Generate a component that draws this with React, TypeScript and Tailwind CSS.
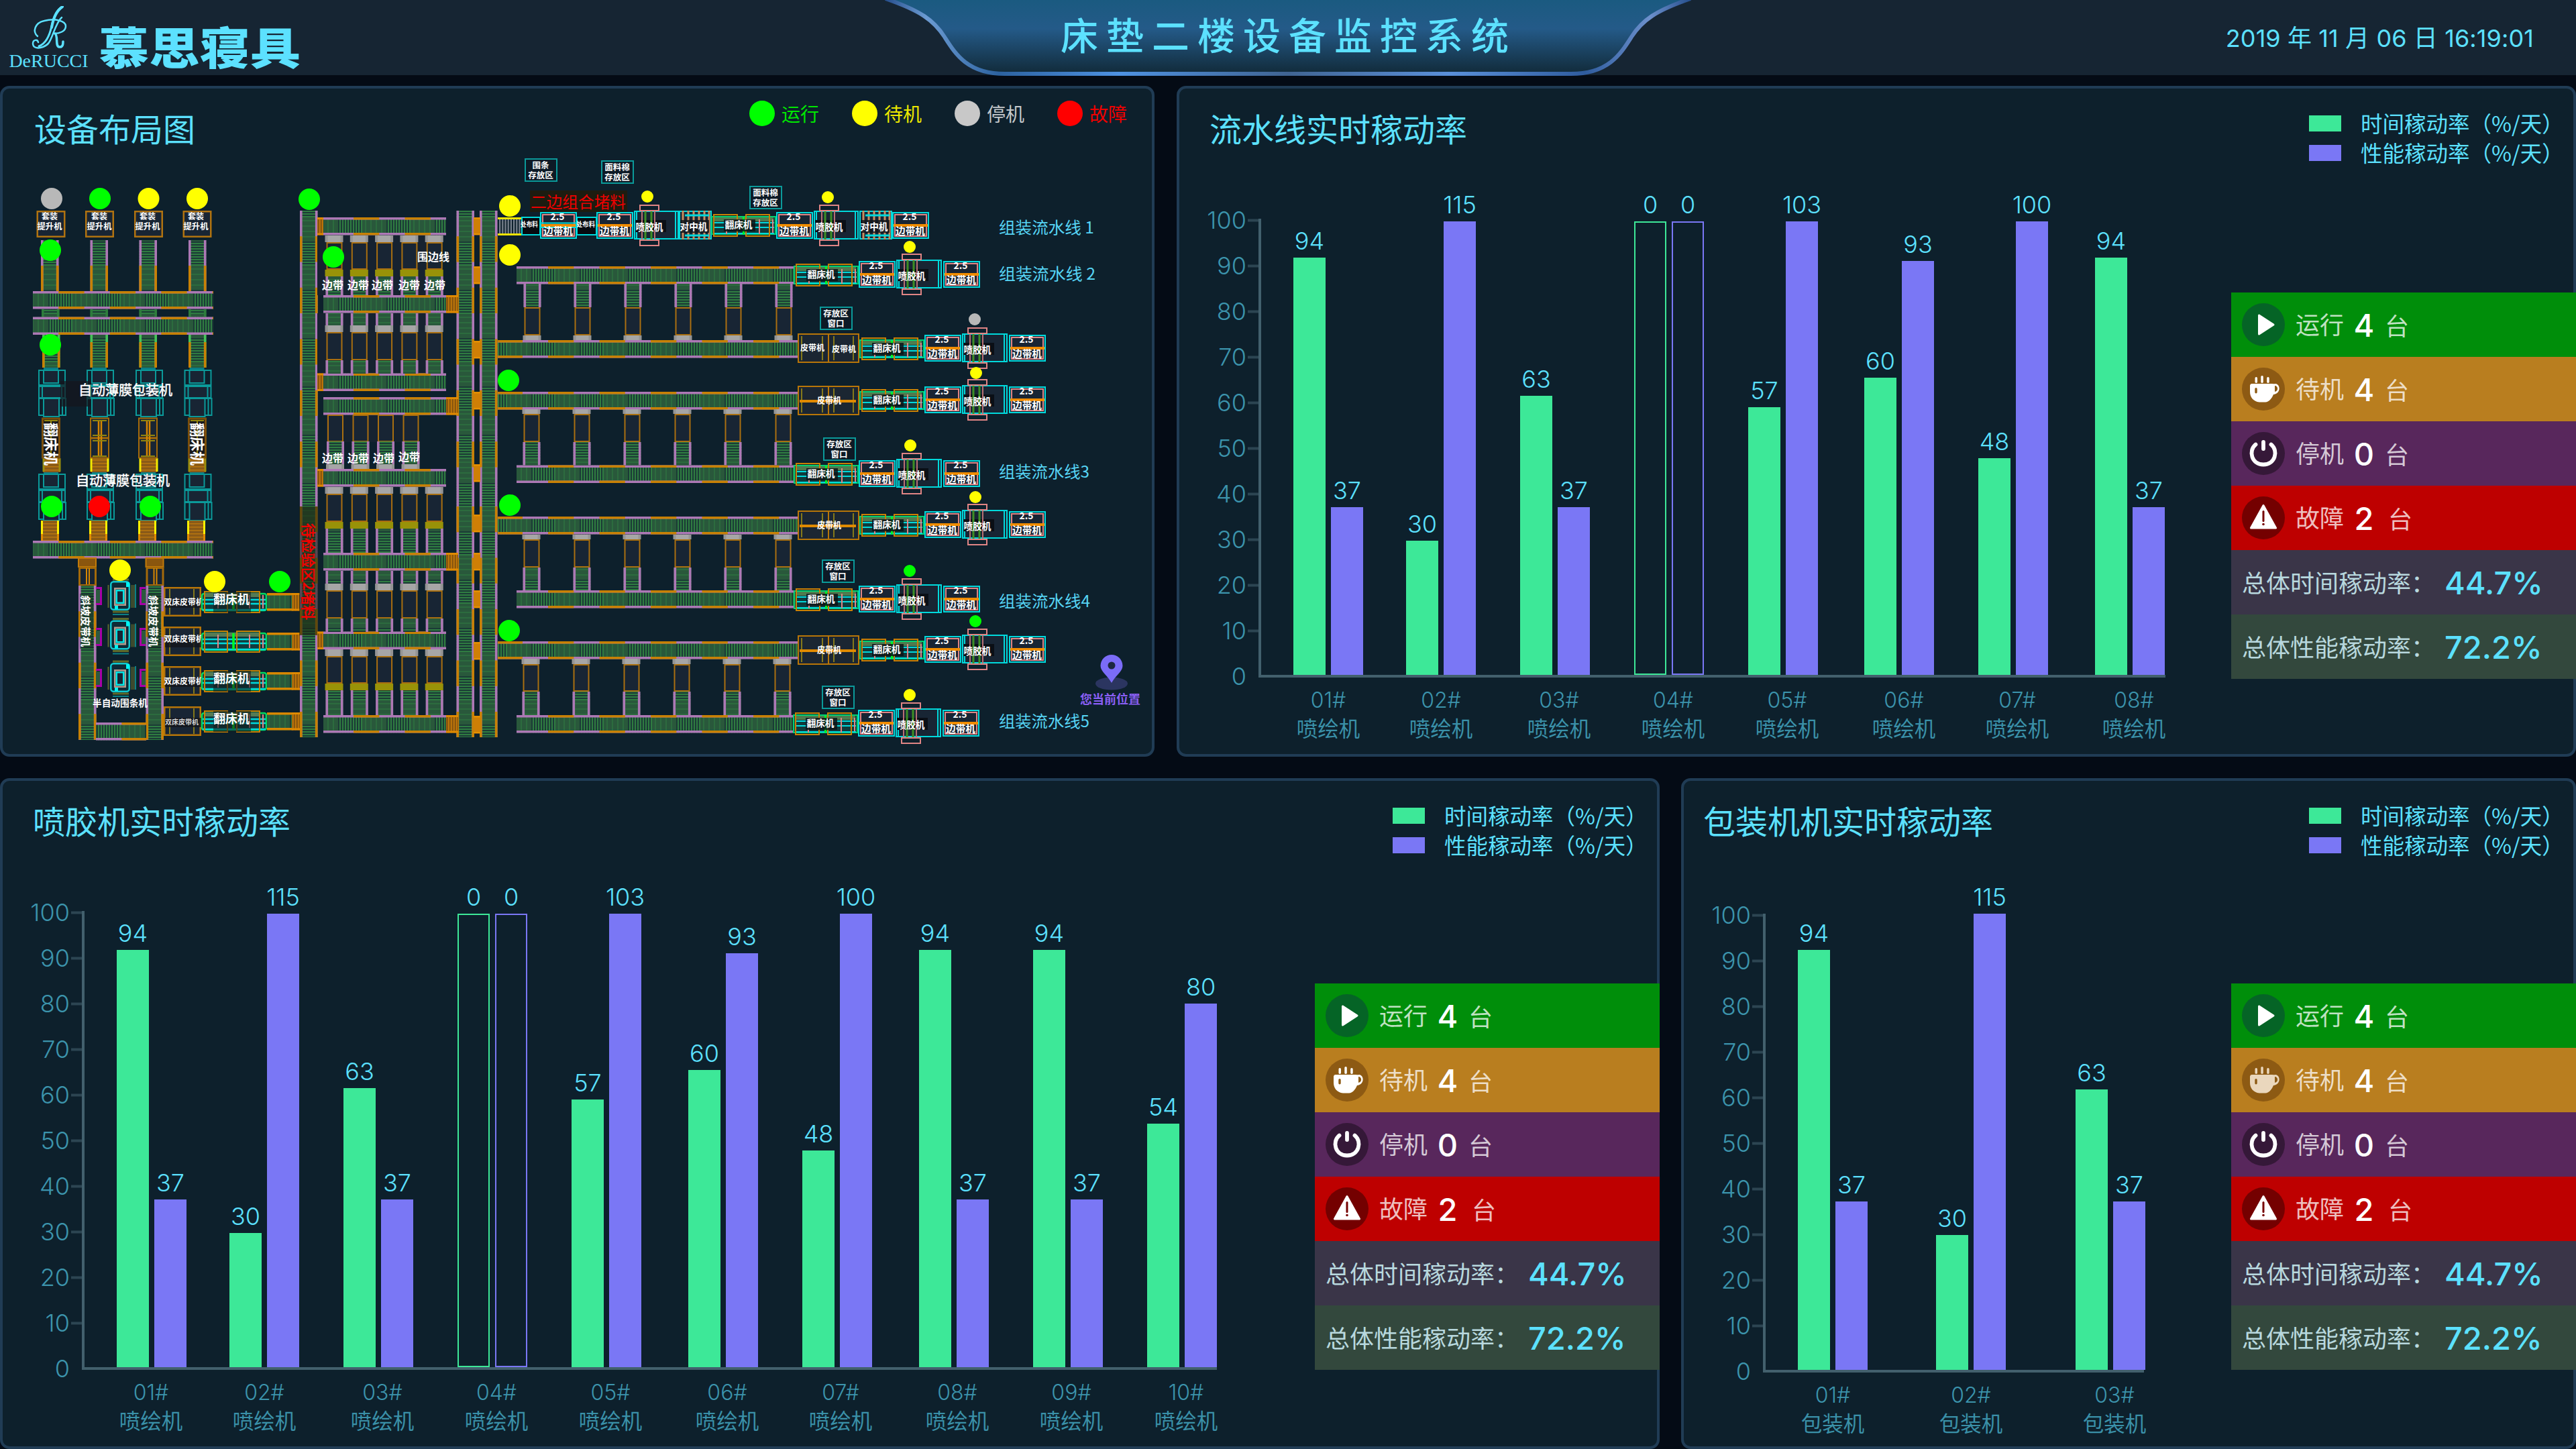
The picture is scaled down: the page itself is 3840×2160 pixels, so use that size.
import React from "react";

const CJK = '"Noto Sans CJK SC", "Noto Sans", sans-serif';
const NUM = 'Inter, "Noto Sans CJK SC", sans-serif';
const PURPLE = "#ad78b5";
const ORANGE = "#c88105";
const CYAN = "#00d9dc";
const TEAL = "#0b9a9a";
const PINK = "#e08585";

/* ---------- layout drawing primitives ---------- */

type TProps = {
  x: number;
  y: number;
  s: number;
  c?: string;
  b?: boolean;
  rot?: boolean;
  len?: number;
  anchor?: "start" | "middle";
  children: React.ReactNode;
};
const T = ({ x, y, s, c = "#ffffff", b, rot, len, anchor = "middle", children }: TProps) => (
  <text
    x={x}
    y={y + s * 0.37}
    fontSize={s}
    fill={c}
    fontWeight={b ? 700 : 400}
    textAnchor={anchor}
    textLength={len}
    lengthAdjust="spacingAndGlyphs"
    transform={rot ? `rotate(90 ${x} ${y})` : undefined}
  >
    {children}
  </text>
);

type BoxProps = { x: number; y: number; w: number; h: number; c?: string; f?: string; sw?: number; r?: number };
const Box = ({ x, y, w, h, c = ORANGE, f = "#182534", sw = 2, r = 0 }: BoxProps) => (
  <rect x={x + sw / 2} y={y + sw / 2} width={w - sw} height={h - sw} stroke={c} strokeWidth={sw} fill={f} rx={r} />
);

type BeltProps = { x: number; y: number; l: number; o?: number; w?: number; a?: string; d?: string };
/* vertical conveyor: rails on both sides, rollers between */
const VBelt = ({ x, y, l, o = 38.3, w = 26.5, a = PURPLE, d = ORANGE }: BeltProps) => (
  <g>
    <rect x={x} y={y} width={w} height={l} fill="url(#rollH)" />
    <path d={`M${x + 1.8} ${y}v${l}M${x + w - 1.8} ${y}v${l}`} stroke={a} strokeWidth={3.6} />
    {l > o && (
      <path
        d={`M${x + 1.8} ${y + o}v${l - o}M${x + w - 1.8} ${y + o}v${l - o}`}
        stroke={d}
        strokeWidth={3.6}
        strokeDasharray="38.3 38.2"
      />
    )}
  </g>
);
/* horizontal conveyor */
const HBelt = ({ x, y, l, o = 38.3, w = 26.5, a = PURPLE, d = ORANGE }: BeltProps) => (
  <g>
    <rect x={x} y={y} width={l} height={w} fill="url(#rollV)" />
    <path d={`M${x} ${y + 1.8}h${l}M${x} ${y + w - 1.8}h${l}`} stroke={a} strokeWidth={3.6} />
    {l > o && (
      <path
        d={`M${x + o} ${y + 1.8}h${l - o}M${x + o} ${y + w - 1.8}h${l - o}`}
        stroke={d}
        strokeWidth={3.6}
        strokeDasharray="38.3 38.2"
      />
    )}
  </g>
);
const Stub = ({ x, y, w, h = 26.5 }: { x: number; y: number; w: number; h?: number }) => (
  <g>
    <rect x={x} y={y} width={w} height={h} fill="url(#rollO)" />
    <path d={`M${x} ${y + 1.5}h${w}M${x} ${y + h - 1.5}h${w}`} stroke="#e08a00" strokeWidth={3} />
  </g>
);

type Part = ["cap" | "box" | "band" | "green", number, number];
const Leg = ({ x, parts }: { x: number; parts: Part[] }) => (
  <g>
    {parts.map(([k, y1, y2], i) => {
      const h = y2 - y1;
      if (k === "cap")
        return (
          <g key={i}>
            <rect x={x - 1} y={y1} width={27} height={h} fill="#959595" />
            <rect x={x + 3} y={y1} width={19} height={h} fill="#a6a6a6" />
          </g>
        );
      if (k === "band") return <rect key={i} x={x - 1} y={y1} width={27} height={h} fill="#989208" />;
      if (k === "box") return <Box key={i} x={x + 1} y={y1} w={24} h={h} c="#a96f10" />;
      return <VBelt key={i} x={x} y={y1} l={h} o={999} w={26} />;
    })}
  </g>
);

const Dot = ({ x, y, c, r = 16 }: { x: number; y: number; c: string; r?: number }) => <circle cx={x} cy={y} r={r} fill={c} />;
const G = "#00ff00";
const Y = "#ffff00";
const R = "#ff0000";
const S = "#b8b8b8";

/* film wrapping machine */
const Wrapper = ({ x, y }: { x: number; y: number }) => (
  <g>
    <rect x={x + 8} y={y - 3} width={22} height={6} fill="#0a7d86" />
    <Box x={x} y={y} w={41} h={24} c={TEAL} f="none" />
    <Box x={x + 7} y={y} w={24} h={21} c={TEAL} />
    <Box x={x} y={y + 24} w={41} h={19} c={TEAL} />
    <path d={`M${x + 6} ${y + 24}v18M${x + 35} ${y + 24}v18`} stroke={TEAL} strokeWidth={2} />
    <Box x={x} y={y + 42} w={42} h={27} c={TEAL} f="none" />
    <Box x={x + 7} y={y + 42} w={25} h={29} c={TEAL} />
    <path d={`M${x + 36} ${y + 42}v26`} stroke={TEAL} strokeWidth={2} />
  </g>
);

/* 2.5 m edging machine */
const Edger = ({ x, cy, cyan }: { x: number; cy: number; cyan?: boolean }) => (
  <g>
    <Box x={x} y={cy - 20} w={55} h={40} c={CYAN} f="#0d2636" />
    <Box x={x + 3} y={cy - 17} w={49} h={34} c={PINK} />
    <rect x={x + 2} y={cy - 2} width={51} height={4} fill="#f08c00" />
    {cyan && <path d={`M${x} ${cy - 3.5}h55M${x + 2} ${cy + 3}h51`} stroke={CYAN} strokeWidth={2} />}
    <T x={x + 26} y={cy - 13} s={14} b len={21}>2.5</T>
    <T x={x + 27} y={cy + 8} s={15} b len={44}>边带机</T>
  </g>
);

/* glue spraying machine */
const Sprayer = ({ x, cy, w = 68 }: { x: number; cy: number; w?: number }) => (
  <g>
    <Box x={x} y={cy - 22} w={w} h={43} c={CYAN} />
    <path d={`M${x + 4} ${cy - 22}v43M${x + w - 5} ${cy - 20}v40`} stroke={CYAN} strokeWidth={2} />
    <Box x={x + 8} y={cy - 31} w={30} h={10} c={PINK} f="none" />
    <Box x={x + 8} y={cy + 21} w={30} h={10} c={PINK} f="none" />
    <rect x={x + 2} y={cy - 8} width={46} height={18} fill="#0a0f16" />
    <path d={`M${x + 12} ${cy - 21}v42M${x + 31} ${cy - 21}v42`} stroke="#b96f73" strokeWidth={2} />
    <path d={`M${x + 17} ${cy - 21}v42M${x + 26} ${cy - 21}v42`} stroke="#3c8f24" strokeWidth={3} />
    <T x={x + 23} y={cy + 2} s={15} b len={41}>喷胶机</T>
  </g>
);

/* bed turning machine */
const Flip = ({ x, cy, w = 95 }: { x: number; cy: number; w?: number }) => (
  <g>
    <rect x={x} y={cy - 13} width={w} height={26} fill="#103a3c" stroke="#00d070" strokeWidth={2} />
    <rect x={x + 3} y={cy - 12} width={w - 6} height={6} fill="#4f7b4f" />
    <path d={`M${x + 2} ${cy - 4}h${w - 4}M${x + 2} ${cy + 3}h${w - 4}M${x + 2} ${cy + 12}h${w - 4}`} stroke={CYAN} strokeWidth={2} />
    <path d={`M${x + 22} ${cy - 9}v22M${x + 71} ${cy - 9}v22M${x + w - 4} ${cy - 9}v20`} stroke={PINK} strokeWidth={2} />
    <path d={`M${x + w / 2} ${cy - 12}v25`} stroke="#00ff20" strokeWidth={3} />
    <Box x={x + 2} y={cy - 17} w={37} h={34} f="none" />
    <Box x={x + 50} y={cy - 17} w={37} h={34} f="none" />
    <rect x={x + 18} y={cy - 9} width={47} height={18} fill="#0c1418" opacity={0.85} />
    <T x={x + 40} y={cy - 1} s={14} b len={41}>翻床机</T>
  </g>
);

/* centring machine */
const Centre = ({ x, cy }: { x: number; cy: number }) => (
  <g>
    <Box x={x} y={cy - 22} w={49} h={43} c={CYAN} />
    {[6, 14, 22, 30, 38, 45].map((d) => (
      <path key={d} d={`M${x + d} ${cy - 22}v43`} stroke="#c98d5e" strokeWidth={3} />
    ))}
    <path d={`M${x + 9} ${cy - 15}h36M${x + 9} ${cy + 15}h36`} stroke={CYAN} strokeWidth={3} />
    <rect x={x + 2} y={cy - 8} width={43} height={19} fill="#12161c" opacity={0.85} />
    <T x={x + 22} y={cy + 2} s={14} b len={41}>对中机</T>
  </g>
);

const BeltMachine = ({ cy, double }: { cy: number; double?: boolean }) => (
  <g>
    <Box x={1189} y={cy - 22} w={47} h={44} f="#1b2632" c="#b87608" />
    <Box x={1234} y={cy - 22} w={47} h={44} f="#1b2632" c="#b87608" />
    <path d={`M1195 ${cy - 18}v36M1226 ${cy - 18}v36M1243 ${cy - 18}v36M1272 ${cy - 18}v36`} stroke="#84791a" strokeWidth={2} />
    {!double && <path d={`M1192 ${cy + 1}h84`} stroke="#e08a00" strokeWidth={4} />}
    {double ? (
      <>
        <T x={1211} y={cy} s={12} b len={36}>皮带机</T>
        <T x={1258} y={cy + 2} s={12} b len={36}>皮带机</T>
      </>
    ) : (
      <T x={1236} y={cy - 1} s={13} b len={36}>皮带机</T>
    )}
  </g>
);

const Store = ({ x, y, a, b }: { x: number; y: number; a: string; b: string }) => (
  <g>
    <Box x={x} y={y} w={49} h={35} c={TEAL} f="#0d1a26" />
    <T x={x + 24} y={y + 10} s={12.5} b>{a}</T>
    <T x={x + 24} y={y + 25} s={12.5} b>{b}</T>
  </g>
);

/* banding machine of the semi-automatic cell */
const Bander = ({ y }: { y: number }) => (
  <g>
    <path d={`M168 ${y - 2}h24M168 ${y + 46}h24`} stroke="#5f6a2a" strokeWidth={3} />
    <path d={`M168 ${y + 50}h24`} stroke="#0b7f86" strokeWidth={2} />
    <path d={`M161.5 ${y + 6}v34`} stroke="#5d682c" strokeWidth={2} />
    <rect x={195} y={y + 6} width={6} height={34} fill="#3d4a2d" />
    <path d={`M202 ${y + 5}v35`} stroke="#0b7f86" strokeWidth={2} />
    <Box x={164} y={y} w={30} h={44} c="#10c8d0" f="#0e2a37" r={4} sw={2.5} />
    <rect x={188} y={y + 2} width={5} height={7} fill="#00f4f4" />
    <rect x={171} y={y + 36} width={5} height={6} fill="#00f4f4" />
    <Box x={170} y={y + 10} w={18} h={27} c="#b39a8c" sw={2.5} />
    <Box x={172.5} y={y + 13} w={13} h={21} c="#00e6e6" sw={2.5} />
  </g>
);

const colX = [61, 134.5, 207.5, 281];

const FactoryMap = () => {
  const five = [0, 1, 2, 3, 4];
  const six = [0, 1, 2, 3, 4, 5];
  return (
    <svg className="absolute left-0 top-0 block" width="1713" height="992" viewBox="4 132 1713 992" fontFamily={CJK}>
      <defs>
        <pattern id="rollH" width="10" height="72" patternUnits="userSpaceOnUse">
          <rect width="10" height="72" fill="#29583b" />
          {[0, 4, 8, 12, 16, 20, 24, 28, 32].map((y) => (
            <g key={y}>
              <rect y={y} width="10" height="2" fill="#1b3b36" />
              <rect y={y + 2} width="10" height="2" fill="#2f7c41" />
            </g>
          ))}
          {[40, 48, 56, 64].map((y) => (
            <rect key={y} y={y} width="10" height="2" fill="#2c6b3e" />
          ))}
        </pattern>
        <pattern id="rollV" width="72" height="10" patternUnits="userSpaceOnUse">
          <rect width="72" height="10" fill="#29583b" />
          {[0, 4, 8, 12, 16, 20, 24, 28, 32].map((x) => (
            <g key={x}>
              <rect x={x} width="2" height="10" fill="#1b3b36" />
              <rect x={x + 2} width="2" height="10" fill="#2f7c41" />
            </g>
          ))}
          {[40, 48, 56, 64].map((x) => (
            <rect key={x} x={x} width="2" height="10" fill="#2c6b3e" />
          ))}
        </pattern>
        <pattern id="rollO" width="4" height="10" patternUnits="userSpaceOnUse">
          <rect width="4" height="10" fill="#8a560e" />
          <rect width="1.5" height="10" fill="#c87c08" />
        </pattern>
        <pattern id="rollY" width="10" height="5" patternUnits="userSpaceOnUse">
          <rect width="10" height="5" fill="#8a5a17" />
          <rect width="10" height="1.5" fill="#b9760e" />
        </pattern>
      </defs>

      {/* packing area */}
      {colX.map((x, i) => (
        <g key={x}>
          <VBelt x={x} y={358} l={76} o={38} />
          <VBelt x={x + (i ? 0 : 1)} y={461} l={12} o={99} a="#2e7d3c" />
          <VBelt x={x + (i ? 0 : 2)} y={499} l={49} o={11} a="#46c25a" />
          <Box x={[54.5, 127, 200, 272.5][i]} y={314} w={43} h={40} c="#b07310" sw={2.5} />
          <T x={[74, 148, 220, 292][i]} y={323} s={12} b>套装</T>
          <T x={[74, 148, 220, 292][i]} y={338} s={12} b len={37}>提升机</T>
          <Wrapper x={[57, 129, 202, 274.5][i]} y={551} />
          <Wrapper x={[57, 129, 202, 274.5][i]} y={706} />
          <rect x={[64, 135, 208, 281][i]} y={683} width={26} height={21} fill="url(#rollY)" />
          <path d={`M${[65, 136, 209, 282][i]} 683v20M${[89, 161, 234, 306][i]} 683v20`} stroke={i === 1 || i === 2 ? "#f4ea00" : "#9c8e0c"} strokeWidth={3} />
          <rect x={[61, 133, 206, 279][i]} y={776} width={26} height={30} fill="url(#rollY)" />
          <path d={`M${[62.5, 134.5, 207.5, 280.5][i]} 776v20M${[86.5, 158.5, 231.5, 304.5][i]} 776v20`} stroke="#fff000" strokeWidth={3} />
          <path d={`M${[62.5, 134.5, 207.5, 280.5][i]} 796v10M${[86.5, 158.5, 231.5, 304.5][i]} 796v10`} stroke="#e08a00" strokeWidth={3} />
        </g>
      ))}
      <HBelt x={49} y={434} l={269} />
      <HBelt x={49} y={472.5} l={269} />
      <HBelt x={49} y={806} l={269} />
      {[134, 206].map((x) => (
        <g key={x}>
          <Box x={x} y={622.5} w={29} h={31} c="#a46a0a" />
          <Box x={x} y={652.5} w={29} h={31} c="#a46a0a" />
          <path d={`M${x + 13} 626v54M${x + 17} 626v54`} stroke="#d88700" strokeWidth={2.5} />
          <path d={`M${x + 4} 627h21M${x + 4} 649h21M${x + 4} 657h21M${x + 4} 680h21`} stroke="#94850d" strokeWidth={2} />
        </g>
      ))}
      {[62, 280].map((x) => (
        <g key={x}>
          <Box x={x} y={622.5} w={28} h={61} c="#7b4f0a" f="#17181b" sw={3} />
          <path d={`M${x + 4} 627h20M${x + 14} 626v54`} stroke="#94850d" strokeWidth={2} />
          <T x={x + 14} y={662} s={22} b rot len={64}>翻床机</T>
        </g>
      ))}
      <rect x={90} y={568} width={45} height={38} fill="#15161c" opacity={0.7} />
      <g stroke="#ffffff" strokeWidth={0.5}>
        <T x={187} y={582} s={20} len={140}>自动薄膜包装机</T>
        <T x={183} y={717} s={20} len={140}>自动薄膜包装机</T>
      </g>

      {/* semi-automatic banding cell */}
      {[117, 217.5].map((x) => (
        <g key={x}>
          <rect x={x} y={832} width={26} height={13} fill="#8a560e" stroke="#c27a08" strokeWidth={2} />
          <Box x={x} y={845} w={27} h={29} c="#a46a0a" sw={3} />
          <path d={`M${x + 12} 847v24M${x + 16} 847v24`} stroke="#d88700" strokeWidth={2} />
          <VBelt x={x} y={873} l={230} />
          <rect x={x + 2} y={885} width={20} height={82} fill="#10201f" opacity={0.45} />
          <T x={x + 11} y={926} s={15} b rot len={77}>斜坡皮带机</T>
        </g>
      ))}
      <HBelt x={143} y={1077} l={75} />
      {[875, 936, 997].map((y) => (
        <g key={y} stroke="#a800a8" strokeWidth={3} fill="#2b5a3e">
          <rect x={143} y={y + 4} width={6} height={20} stroke="none" />
          <rect x={211} y={y + 4} width={6} height={20} stroke="none" />
          <path d={`M143 ${y + 1.5}h7.5v24H143M217 ${y + 1.5}h-7.5v24H217`} fill="none" />
        </g>
      ))}
      {[866, 924.5, 988].map((y) => (
        <Bander key={y} y={y} />
      ))}
      <T x={179} y={1048} s={14} b len={82}>半自动围条机</T>

      {[
        { y: 875, t: true },
        { y: 934, t: false },
        { y: 993, t: true },
        { y: 1053, t: true },
      ].map(({ y, t }, i) => (
        <g key={y}>
          <Box x={244} y={y} w={56} h={44} c="#b87608" sw={2.5} />
          <path d={`M253 ${y + 3}v38M289 ${y + 3}v38`} stroke="#84791a" strokeWidth={2} />
          <rect x={246} y={y + 17} width={54} height={14} fill="#14151a" opacity={0.8} />
          <T x={i === 3 ? 271 : 274} y={y + (i === 1 ? 19 : 23)} s={i === 3 ? 10 : 12} b len={i === 3 ? 50 : 59} c={i === 3 ? "#d6d6d6" : "#fff"}>
            双床皮带机
          </T>
          <rect x={301} y={y + 10} width={96} height={25} fill="#123a3d" stroke="#00d860" strokeWidth={2.5} rx={3} />
          <path d={`M302 ${y + 19}h94M302 ${y + 25}h94M302 ${y + 34}h94`} stroke={CYAN} strokeWidth={2.5} />
          <rect x={306} y={y + 9} width={82} height={6} fill="#557b55" />
          <path d={`M325 ${y + 12}v20M372 ${y + 12}v20M392 ${y + 12}v20`} stroke={PINK} strokeWidth={2} />
          <path d={`M348 ${y + 10}v24`} stroke="#00ff20" strokeWidth={3.5} />
          <Box x={304} y={y + 6} w={36} h={33} f="none" />
          <Box x={352} y={y + 6} w={36} h={33} f="none" />
          {t && (
            <>
              <rect x={318} y={y + 7} width={56} height={31} fill="#101c1e" opacity={0.6} />
              <T x={345} y={y + 18} s={18} b len={54}>翻床机</T>
            </>
          )}
          <HBelt x={398} y={y + 9} l={38} a="#d88700" o={99} />
          <Stub x={435} y={y + 9} w={12} />
        </g>
      ))}

      {/* main transfer lines */}
      {[447, 680.5, 715].map((x) => (
        <g key={x}>
          <VBelt x={x} y={314} l={383} />
          <VBelt x={x} y={697} l={402} o={58} />
        </g>
      ))}
      <rect x={446} y={755} width={28} height={192} fill="#1c2410" opacity={0.6} />
      <g stroke="#f00000" strokeWidth={0.7}>
        <T x={460} y={852} s={21} c="#f80000" rot len={144}>待检验区2堵料</T>
      </g>
      {[324, 397, 508, 584, 692, 767, 824, 880, 957, 1067].map((y) => (
        <g key={y}>
          <rect x={706} y={y} width={10} height={26.5} fill="#cf7f06" />
          <path d={`M706 ${y + 1.5}h10M706 ${y + 25}h10`} stroke="#e89200" strokeWidth={2} />
        </g>
      ))}

      {/* edging area */}
      <rect x={473} y={351} width={180} height={89} fill="#162230" />
      <rect x={473} y={467} width={180} height={90} fill="#162230" />
      <rect x={486} y={619} width={138} height={40} fill="#162230" />
      {[324, 440, 556.5, 592, 699, 824, 941.5, 1066].map((y, i) => {
        const left = [0, 2, 4, 6].includes(i);
        return (
          <g key={y}>
            <HBelt x={482} y={y} l={183} o={45} />
            <Stub x={left ? 473 : 665} y={y} w={left ? 9 : 18} />
          </g>
        );
      })}
      {five.map((i) => {
        const x = 485.5 + i * 37.3;
        return (
          <g key={i}>
            <Leg x={x} parts={[["cap", 351, 361], ["box", 361, 402], ["band", 402, 412], ["green", 412, 440]]} />
            <Leg x={x} parts={[["green", 467, 485], ["cap", 485, 495], ["box", 495, 537], ["green", 537, 557]]} />
            <Leg x={x} parts={[["cap", 726, 736], ["box", 736, 778], ["band", 778, 788], ["green", 788, 824]]} />
            <Leg x={x} parts={[["green", 851, 870], ["cap", 870, 880], ["box", 880, 922], ["green", 922, 942]]} />
            <Leg x={x} parts={[["cap", 968, 978], ["box", 978, 1019], ["band", 1019, 1029], ["green", 1029, 1066]]} />
            <T x={[496, 534, 570, 610, 648][i]} y={425} s={16} b>边带</T>
          </g>
        );
      })}
      {[0, 1, 2, 3].map((i) => (
        <g key={i}>
          <Leg x={487 + i * 37.5} parts={[["box", 618, 659], ["green", 658, 692], ["cap", 692, 699]]} />
          <T x={[496, 534, 572, 610][i]} y={i === 3 ? 681 : 683} s={16} b>边带</T>
        </g>
      ))}
      <T x={646} y={383} s={16} b>围边线</T>

      {/* assembly buffers */}
      <HBelt x={770} y={397} l={419} o={47} />
      <HBelt x={742} y={507} l={447} o={75} />
      <HBelt x={742} y={584} l={447} o={75} />
      <HBelt x={770} y={693.5} l={414} o={47} />
      <HBelt x={742} y={770} l={447} o={75} />
      <HBelt x={770} y={880} l={414} o={47} />
      <HBelt x={742} y={956} l={447} o={75} />
      <HBelt x={770} y={1066} l={414} o={47} />
      {[507, 584, 770, 956].map((y) => (
        <path key={y} d={`M742 ${y + 1.8}h37M742 ${y + 24.7}h37`} stroke={ORANGE} strokeWidth={3.6} />
      ))}
      {six.map((i) => {
        const x = 780.5 + i * 75;
        return (
          <g key={i}>
            <Leg x={x} parts={[["green", 423, 458], ["box", 458, 500], ["cap", 500, 507]]} />
            <Leg x={x - 1} parts={[["cap", 610, 617], ["box", 617, 659], ["green", 659, 693.5]]} />
            <Leg x={x - 1} parts={[["cap", 797, 804], ["box", 804, 846], ["green", 846, 880]]} />
            <Leg x={x - 2} parts={[["cap", 982, 990], ["box", 990, 1031], ["green", 1031, 1066]]} />
          </g>
        );
      })}

      {/* assembly line 1 */}
      {[0, 1, 2, 3, 4, 5, 6, 7].map((i) => (
        <rect key={i} x={744 + i * 4.2} y={326} width={2.2} height={23} fill="#77808c" />
      ))}
      <path d="M742 325.5h35M742 349.5h35" stroke="#f0e400" strokeWidth={3} />
      <Box x={777} y={323} w={29} h={28} c={CYAN} f="#060a10" />
      <Box x={859} y={323} w={31} h={28} c={CYAN} f="#060a10" />
      <T x={789} y={334} s={10} b len={26}>处布料</T>
      <T x={873} y={334} s={10} b len={28}>处布料</T>
      <Edger x={805} cy={336} cyan />
      <Edger x={889} cy={336} />
      <Sprayer x={945} cy={336} w={67} />
      <Centre x={1012} cy={336} />
      <Flip x={1061} cy={336} />
      <Edger x={1157} cy={336} />
      <Sprayer x={1213} cy={336} w={67} />
      <Centre x={1281} cy={336} />
      <Edger x={1330} cy={336} />
      <rect x={790} y={284} width={145} height={32} fill="#1d1c10" />
      <T x={862} y={301} s={24} c="#ee0000" len={142}>二边组合堵料</T>

      {/* remaining lines */}
      {[
        [1280, 409],
        [1378, 519],
        [1378, 596],
        [1280, 706],
        [1378, 782],
        [1280, 893],
        [1378, 968],
        [1279, 1078],
      ].map(([x, cy]) => (
        <g key={cy}>
          <Flip x={x - 96} cy={cy + 1} />
          <Edger x={x} cy={cy} />
          <Sprayer x={x + 56} cy={cy} />
          <Edger x={x + 126} cy={cy} />
        </g>
      ))}
      <BeltMachine cy={519} double />
      <BeltMachine cy={597} />
      <BeltMachine cy={783} />
      <BeltMachine cy={969} />

      <Store x={782} y={236} a="围条" b="存放区" />
      <Store x={896} y={239} a="面料棉" b="存放区" />
      <Store x={1117} y={277} a="面料棉" b="存放区" />
      <Store x={1222} y={457} a="存放区" b="窗口" />
      <Store x={1227} y={652} a="存放区" b="窗口" />
      <Store x={1225} y={834} a="存放区" b="窗口" />
      <Store x={1225} y={1022} a="存放区" b="窗口" />

      {(
        [
          ["组装流水线 1", 339, 142],
          ["组装流水线 2", 408, 144],
          ["组装流水线3", 703, 135],
          ["组装流水线4", 896, 136],
          ["组装流水线5", 1075, 135],
        ] as [string, number, number][]
      ).map(([t, y, len]) => (
        <T key={t} x={1489} y={y} s={24} c="#56d4f4" anchor="start" len={len}>
          {t}
        </T>
      ))}

      {/* status lamps */}
      {(
        [
          [77, 296, S], [149, 296, G], [221.5, 296, Y], [294, 296, Y], [75, 373, G], [75, 514, G], [461, 297, G],
          [77, 755, G], [148, 755, R], [224, 755, G], [179, 850, Y], [320, 867, Y], [417, 867, G],
          [497, 383, G], [760, 307, Y], [760, 380, Y], [758, 567, G], [760, 753, G], [759, 940, G],
        ] as [number, number, string][]
      ).map(([x, y, c]) => (
        <Dot key={`${x}-${y}`} x={x} y={y} c={c} />
      ))}
      {(
        [
          [965, 293, Y], [1234, 294, Y], [1356, 368, Y], [1453, 476, S], [1455, 556, Y],
          [1357, 664, Y], [1454, 741, Y], [1356, 851, G], [1454, 926, G], [1356, 1036, Y],
        ] as [number, number, string][]
      ).map(([x, y, c]) => (
        <Dot key={`${x}-${y}`} x={x} y={y} c={c} r={9} />
      ))}

      {/* current position */}
      <ellipse cx={1657} cy={1019} rx={24} ry={9.5} fill="#2b3560" />
      <path d="M1657 1018C1652 1008 1640.5 1001 1640.5 992.500a16.5 16.5 0 0 1 33 0C1673.500 1001 1662 1008 1657 1018Z" fill="#7b6cf8" />
      <circle cx={1657} cy={992} r={5.5} fill="#1d2740" />
      <T x={1655} y={1042} s={18} b c="#8a5ff5" len={90}>您当前位置</T>
    </svg>
  );
};

/* ---------- bar charts ---------- */

type Bar = { x: number; lx: number; id: string; a: number; b: number };
type ChartProps = {
  vx: number;
  vy: number;
  w: number;
  axis: number;
  top: number;
  end: number;
  unit: string;
  /* extra height of the tallest bar; shorter bars grow in proportion */
  grow?: number;
  bars: Bar[];
};

/* drawn bar height for each value, in pixels above the base line */
const HEIGHTS: Record<number, number> = {
  94: 622, 115: 676, 103: 676, 100: 676, 63: 416, 37: 250, 30: 200, 57: 399, 60: 443, 93: 617, 48: 323, 54: 363, 80: 542,
};

const Chart = ({ vx, vy, w, axis, top, end, unit, grow = 0, bars }: ChartProps) => {
  const base = top + 678;
  const one = (x: number, v: number, c: string) => {
    const raw = v === 0 ? 676 : HEIGHTS[v];
    const h = Math.round(raw + (grow * raw) / 676);
    return (
      <g>
        {v === 0 ? (
          <rect x={x + 1} y={base - h + 1} width={46} height={h - 2} fill="none" stroke={c} strokeWidth={2} />
        ) : (
          <rect x={x} y={base - h} width={48} height={h} fill={c} />
        )}
        <text x={x + 24} y={base - h - 12} fontSize={36} fill="#5ce1ff" textAnchor="middle" fontWeight={350}>
          {v}
        </text>
      </g>
    );
  };
  return (
    <svg className="block flex-none" width={w} height={868} viewBox={`${vx} ${vy} ${w} 868`} fontFamily={NUM}>
      {[100, 90, 80, 70, 60, 50, 40, 30, 20, 10, 0].map((v, i) => (
        <g key={v}>
          <text x={axis - 18} y={top + i * 68 + 13} fontSize={36} fill="#3c94ac" textAnchor="end" fontWeight={350}>
            {v}
          </text>
          {v > 0 && <rect x={axis - 16} y={top + i * 68 - 1.5} width={16} height={4} fill="#2c4552" />}
        </g>
      ))}
      {bars.map((b) => (
        <g key={b.id}>
          {one(b.x, b.a, "#3de898")}
          {one(b.x + 56, b.b, "#7a77f5")}
          <text x={b.lx} y={top + 727} fontSize={32} fill="#3c94ac" textAnchor="middle" fontWeight={350}>
            {b.id}
          </text>
          <text x={b.lx} y={top + 770} fontSize={31.5} fill="#3a90a8" textAnchor="middle" fontWeight={400} fontFamily={CJK}>
            {unit}
          </text>
        </g>
      ))}
      <path d={`M${axis + 2} ${top - 2}V${base + 2}H${end}`} fill="none" stroke="#42606d" strokeWidth={4} />
    </svg>
  );
};

/* ---------- status column ---------- */

const PlayIcon = () => (
  <svg viewBox="0 0 64 64" className="size-16">
    <path d="M25.500 18v28L47 32Z" fill="#fff" stroke="#fff" strokeWidth="3" strokeLinejoin="round" />
  </svg>
);
const CupIcon = ({ dim }: { dim?: boolean }) => (
  <svg viewBox="0 0 64 64" className="size-16" fill={dim ? "#ead7bd" : "#fff"}>
    <rect x="19.5" y="14" width="3.5" height="9" rx="1.7" />
    <rect x="28.3" y="12" width="3.5" height="11" rx="1.7" />
    <rect x="37.2" y="14" width="3.5" height="9" rx="1.7" />
    <path
      fillRule="evenodd"
      d="M14.5 24H45q4 .5 5 0c8 1 8 15-3 16-3 7-7 11-12 11.5h-9C17 50.5 12 44 12 36v-9.5q.3-2.3 2.5-2.5Zm6.500 6a1.7 1.7 0 0 0-1.7 1.7v5a1.7 1.7 0 0 0 3.4 0v-5A1.7 1.7 0 0 0 21 30Zm28-3v9c6-1 5-9 0-9Z"
    />
  </svg>
);
const PowerIcon = () => (
  <svg viewBox="0 0 64 64" className="size-16" fill="none" stroke="#fff" strokeWidth="5.8" strokeLinecap="round">
    <path d="M32 15v10" />
    <path d="M20.5 18.5C9 28 14.5 48.5 32 48.5S55 28 43.500 18.5" />
  </svg>
);
const WarnIcon = () => (
  <svg viewBox="0 0 64 64" className="size-16">
    <path d="M32 13.5 50.5 47H13.5Z" fill="#fff" stroke="#fff" strokeWidth="3" strokeLinejoin="round" />
    <path d="M32 22.5v14" stroke="#760000" strokeWidth="3" strokeLinecap="round" />
    <circle cx="32" cy="41.5" r="1.8" fill="#760000" />
  </svg>
);

const StatusRow = ({ bg, disc, icon, label, n, wide }: { bg: string; disc: string; icon: React.ReactNode; label: string; n: number; wide?: boolean }) => (
  <div className={`flex h-24 items-center pl-4 ${bg}`}>
    <div className={`size-16 rounded-full ${disc}`}>{icon}</div>
    <span className="-mt-1 ml-4 w-[72px] text-[36px] leading-none font-normal text-white/75">{label}</span>
    <span className="ml-[14px] w-[32px] text-center font-[Inter] text-[47px] leading-none font-medium text-white">{n}</span>
    <span className={`text-[36px] leading-none font-normal text-white/75 ${wide ? "ml-[20px]" : "ml-[15px]"}`}>台</span>
  </div>
);

const RateRow = ({ bg, label, v }: { bg: string; label: string; v: string }) => (
  <div className={`flex h-24 items-center pl-4 ${bg}`}>
    <span className="-mt-0.5 w-[302px] text-[36px] leading-none font-normal whitespace-nowrap text-[#b8d8de]">{label}</span>
    <span className="font-[Inter] text-[47px] leading-none font-medium text-[#5ce1ff]">{v}</span>
  </div>
);

const Stats = ({ className, dim }: { className: string; dim?: boolean }) => (
  <div className={`relative -mr-1 h-[576px] w-[514px] flex-none ${className}`}>
    <StatusRow bg="bg-[#008e0a]" disc="bg-[#056426]" icon={<PlayIcon />} label="运行" n={4} />
    <StatusRow bg="bg-[#b97e1f]" disc="bg-[#8d5a13]" icon={<CupIcon dim={dim} />} label="待机" n={4} />
    <StatusRow bg="bg-[#58275c]" disc="bg-[#351838]" icon={<PowerIcon />} label="停机" n={0} />
    <StatusRow bg="bg-[#be0000]" disc="bg-[#740000]" icon={<WarnIcon />} label="故障" n={2} wide />
    <RateRow bg="bg-[#3a3548]" label="总体时间稼动率：" v="44.7%" />
    <RateRow bg="bg-[#33483d]" label="总体性能稼动率：" v="72.2%" />
  </div>
);

const PANEL = "relative flex flex-none flex-col rounded-[14px] border-4 border-[#203c55] bg-[#0d202c]";

const ChartPanel = ({ size, title, pad, statsTop, dim, chart }: { size: string; title: string; pad: string; statsTop: string; dim?: boolean; chart: ChartProps }) => (
  <section className={`${PANEL} ${size}`}>
    <div className={`flex h-[124px] flex-none items-start justify-between ${pad}`}>
      <h2 className="mt-[34px] text-[48px] leading-[48px] font-normal text-[#5ce1ff]">{title}</h2>
      <ul className="mt-[30px] w-[394px] flex-none">
        <li className="flex h-11 items-center">
          <i className="mr-[29px] h-6 w-12 bg-[#3de898]" />
          <span className="-mt-0.5 text-[32.5px] leading-none font-normal whitespace-nowrap text-[#5ce1ff]">时间稼动率（%/天）</span>
        </li>
        <li className="flex h-11 items-center">
          <i className="mr-[29px] h-6 w-12 bg-[#7a77f5]" />
          <span className="-mt-0.5 text-[32.5px] leading-none font-normal whitespace-nowrap text-[#5ce1ff]">性能稼动率（%/天）</span>
        </li>
      </ul>
    </div>
    <div className="flex items-start">
      <Chart {...chart} />
      <Stats className={statsTop} dim={dim} />
    </div>
  </section>
);

/* ---------- header ---------- */

const Logo = () => (
  <div className="flex items-end">
    <div className="ml-[14px] flex w-[120px] flex-col items-center">
      <svg width="60" height="64" viewBox="0 0 60 64" fill="none" stroke="#5ce1ff" strokeLinecap="round">
        <path d="M49 1C40 6 36 16 33 30S24 56 14 60" strokeWidth="3" />
        <path d="M49 1C39 8 35 20 33 32" strokeWidth="4" />
        <path d="M48 17C42 22 38 34 34 44S28 58 20 61 5 62 5 56s7-7 8-2" strokeWidth="2.5" />
        <path d="M12 45C4 38 8 25 22 22 38 18 54 22 54 30S44 41 37 41" strokeWidth="2.5" />
        <path d="M38 41C43 44 38 60 44 61s6-5 6-8" strokeWidth="3.5" />
      </svg>
      <span className="mt-[5px] -ml-[3px] font-['Liberation_Serif'] text-[28px] leading-[26px] text-[#5ce1ff]">DeRUCCI</span>
    </div>
    <span className="mb-1 ml-[13px] origin-left scale-x-[1.14] text-[66px] leading-[66px] font-black text-[#5ce1ff]">慕思寝具</span>
  </div>
);

const Banner = () => (
  <div className="absolute top-0 left-[1310px] flex h-[113px] w-[1220px] justify-center">
    <svg className="absolute inset-0" width="1220" height="113" viewBox="1310 0 1220 113">
      <defs>
        <linearGradient id="bf" x1="0" y1="0" x2="0" y2="1">
          <stop offset="0" stopColor="#1a5a80" />
          <stop offset=".4" stopColor="#245a88" />
          <stop offset=".98" stopColor="#122c3c" />
        </linearGradient>
        <linearGradient id="bs" gradientUnits="userSpaceOnUse" x1="1321" y1="0" x2="2519" y2="0">
          <stop offset="0" stopColor="#27508e" />
          <stop offset=".05" stopColor="#6c9bd2" />
          <stop offset=".14" stopColor="#2c62a0" />
          <stop offset=".29" stopColor="#4e92e2" />
          <stop offset=".5" stopColor="#406492" />
          <stop offset=".7" stopColor="#5a90da" />
          <stop offset=".87" stopColor="#2f5c9e" />
          <stop offset=".95" stopColor="#6c90cc" />
          <stop offset="1" stopColor="#27508e" />
        </linearGradient>
      </defs>
      <path
        d="M1320 -2C1372 16 1392 30 1408 55S1442 110 1498 110H2342C2398 110 2416 80 2432 55S2468 16 2520 -2"
        fill="url(#bf)"
        stroke="url(#bs)"
        strokeWidth="6"
      />
    </svg>
    <h1 className="relative mt-[22px] ml-[2px] text-[56px] leading-[56px] font-medium tracking-[12px] whitespace-nowrap text-[#5ce1ff]">床垫二楼设备监控系统</h1>
  </div>
);

const Lamp = ({ c, t, label }: { c: string; t: string; label: string }) => (
  <div className="flex w-[153px] items-center">
    <i className={`size-[38px] rounded-full ${c}`} />
    <span className={`ml-[10px] text-[28px] leading-none ${t}`}>{label}</span>
  </div>
);

export default function App() {
  return (
    <div className="flex h-[2160px] w-[3840px] flex-col overflow-hidden bg-[#040b15] font-['Noto_Sans_CJK_SC','Noto_Sans',sans-serif]">
      <header className="relative flex h-[112px] flex-none items-start justify-between bg-[#162533]">
        <div className="mt-[9px]">
          <Logo />
        </div>
        <Banner />
        <time className="mt-[39px] mr-[63px] font-[Inter,'Noto_Sans_CJK_SC'] text-[36px] leading-[36px] font-normal tracking-[0.1px] whitespace-pre text-[#5ce1ff]">
          2019 年 11 月 06 日 16:19:01
        </time>
      </header>

      <main className="mt-4 flex flex-col gap-8">
        <div className="flex gap-[33px]">
          <section className={`${PANEL} h-[1000px] w-[1721px]`}>
            <FactoryMap />
            <div className="relative flex items-start justify-between">
              <h2 className="mt-[34px] ml-[47px] text-[48px] leading-[48px] font-normal text-[#5ce1ff]">设备布局图</h2>
              <div className="mt-[18px] -mr-[12px] flex">
                <Lamp c="bg-[#00ff00]" t="text-[#00e800]" label="运行" />
                <Lamp c="bg-[#ffff00]" t="text-[#ece800]" label="待机" />
                <Lamp c="bg-[#c8c8c8]" t="text-[#c4c8cb]" label="停机" />
                <Lamp c="bg-[#ff0000]" t="text-[#f00000]" label="故障" />
              </div>
            </div>
          </section>
          <ChartPanel
            size="h-[1000px] w-[2086px]"
            title="流水线实时稼动率"
            pad="pl-[45px]"
            statsTop="mt-[180px]"
            chart={{
              vx: 1758, vy: 256, w: 1568, axis: 1876, top: 328, end: 3228, unit: "喷绘机",
              bars: [
                { x: 1928, lx: 1980, id: "01#", a: 94, b: 37 },
                { x: 2096, lx: 2148, id: "02#", a: 30, b: 115 },
                { x: 2266, lx: 2324, id: "03#", a: 63, b: 37 },
                { x: 2436, lx: 2494, id: "04#", a: 0, b: 0 },
                { x: 2606, lx: 2664, id: "05#", a: 57, b: 103 },
                { x: 2779, lx: 2838, id: "06#", a: 60, b: 93 },
                { x: 2949, lx: 3007, id: "07#", a: 48, b: 100 },
                { x: 3123, lx: 3181, id: "08#", a: 94, b: 37 },
              ],
            }}
          />
        </div>
        <div className="flex gap-[32px]">
          <ChartPanel
            size="h-[1000px] w-[2474px]"
            title="喷胶机实时稼动率"
            pad="pl-[45px]"
            statsTop="mt-[178px]"
            chart={{
              vx: 4, vy: 1288, w: 1956, axis: 122, top: 1360, end: 1814, unit: "喷绘机",
              bars: [
                { x: 174, lx: 225, id: "01#", a: 94, b: 37 },
                { x: 342, lx: 394, id: "02#", a: 30, b: 115 },
                { x: 512, lx: 570, id: "03#", a: 63, b: 37 },
                { x: 682, lx: 740, id: "04#", a: 0, b: 0 },
                { x: 852, lx: 910, id: "05#", a: 57, b: 103 },
                { x: 1026, lx: 1084, id: "06#", a: 60, b: 93 },
                { x: 1196, lx: 1253, id: "07#", a: 48, b: 100 },
                { x: 1370, lx: 1427, id: "08#", a: 94, b: 37 },
                { x: 1540, lx: 1597, id: "09#", a: 94, b: 37 },
                { x: 1710, lx: 1768, id: "10#", a: 54, b: 80 },
              ],
            }}
          />
          <ChartPanel
            size="h-[1000px] w-[1334px]"
            title="包装机机实时稼动率"
            pad="pl-[29px]"
            statsTop="mt-[178px]"
            dim
            chart={{
              vx: 2510, vy: 1288, w: 816, axis: 2628, top: 1364, end: 3196, unit: "包装机", grow: 4,
              bars: [
                { x: 2680, lx: 2732, id: "01#", a: 94, b: 37 },
                { x: 2886, lx: 2938, id: "02#", a: 30, b: 115 },
                { x: 3094, lx: 3152, id: "03#", a: 63, b: 37 },
              ],
            }}
          />
        </div>
      </main>
    </div>
  );
}
